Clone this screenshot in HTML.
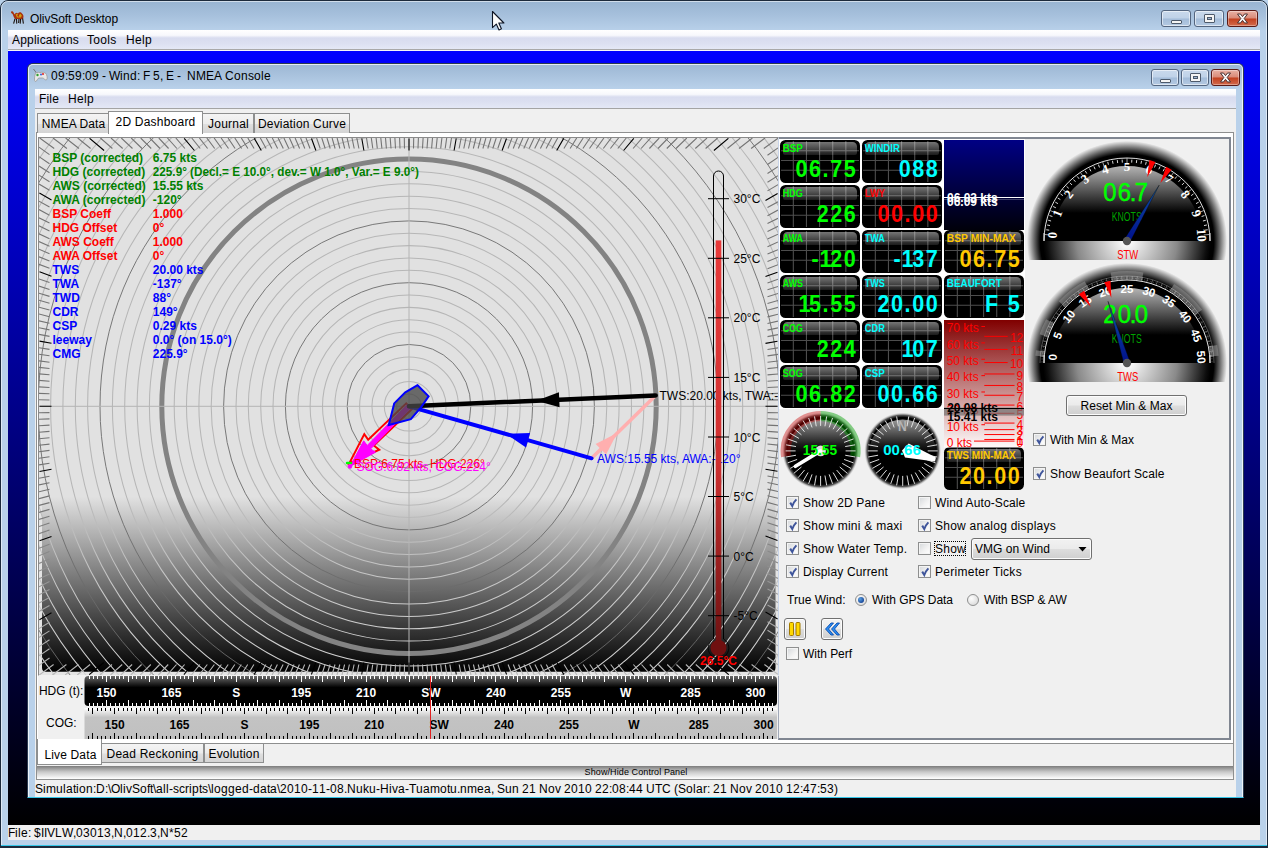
<!DOCTYPE html><html><head><meta charset="utf-8"><title>OlivSoft Desktop</title><style>
html,body{margin:0;padding:0}
body{width:1268px;height:848px;overflow:hidden;position:relative;background:#b9d1ea;font-family:"Liberation Sans",sans-serif;font-size:12px;color:#000;line-height:14px}
.a{position:absolute;box-sizing:border-box}
.t{position:absolute;white-space:nowrap;line-height:14px;height:14px}
.b{font-weight:bold}
.wb{position:absolute;box-sizing:border-box;border:1px solid #53657f;border-radius:3px;background:linear-gradient(#c9d9ec 0,#bfd2e8 48%,#a3bcd9 52%,#b4c9e2 100%);box-shadow:inset 0 0 0 1px rgba(255,255,255,.55)}
.wc{position:absolute;box-sizing:border-box;border:1px solid #5a1a16;border-radius:3px;background:linear-gradient(#e8b1a4 0,#d98a78 48%,#c2401f 52%,#d36a4c 100%);box-shadow:inset 0 0 0 1px rgba(255,255,255,.35)}
.menu{position:absolute;box-sizing:border-box;background:linear-gradient(#ffffff 0,#f7f8fc 28%,#d8dcef 42%,#dce0f1 70%,#e4e8f6 100%)}
.tab{position:absolute;box-sizing:border-box;border:1px solid #8e8f8f;border-bottom:none;background:linear-gradient(#f4f4f4 0,#ececec 50%,#dfdfdf 55%,#d4d4d4 100%);text-align:center;white-space:nowrap}
.tabs{position:absolute;box-sizing:border-box;border:1px solid #8e8f8f;border-bottom:none;background:#fff;text-align:center;white-space:nowrap}
.cb{position:absolute;box-sizing:border-box;width:13px;height:13px;border:1px solid #8e8f8f;background:linear-gradient(135deg,#d4d7da 0,#f3f3f3 60%,#fff 100%);box-shadow:inset 0 0 0 1px #f4f4f4}
.btn{position:absolute;box-sizing:border-box;border:1px solid #707070;border-radius:3px;background:linear-gradient(#f2f2f2 0,#ebebeb 48%,#dddddd 52%,#cfcfcf 100%);box-shadow:inset 0 0 0 1px #fcfcfc;text-align:center;white-space:nowrap}
</style></head><body><div class="a" style="left:0;top:0;width:1268px;height:848px;border:1px solid #1c2a3c;border-radius:8px 8px 0 0;background:linear-gradient(#98b4d2 0,#a6c0dc 14px,#b9d1ea 30px,#b9d1ea 100%)"></div><div class="a" style="left:1px;top:1px;width:1266px;height:846px;border:1px solid rgba(255,255,255,.55);border-radius:7px 7px 0 0"></div><div class="a" style="left:1px;top:845px;width:1266px;height:1px;background:#35c6e8"></div><div class="a" style="left:0;top:846px;width:1268px;height:2px;background:#1c2a3c"></div><svg class="a" style="left:10px;top:10px" width="16" height="16" viewBox="10 10 16 16"><path d="M11 11.6 L12.6 11.2 L13.6 12.4 L14.4 14.6 C15.5 12.6 17 12 18 13.4 C19 11.8 21 11.8 22 13.6 C23.4 14.6 23.8 16.4 23.2 18.4 L21.6 19.2 L15.4 19 L14 17.6 L12.6 14 L11.2 13 Z" fill="#a8300c"/><path d="M15.6 14.4 L17.4 13.6 L18.4 15.4 L20.4 13.8 L21.8 15.4 L21 17.4 L17 17.6 Z" fill="#cfa010"/><path d="M17.2 15 L18.6 14.6 L19.4 16.2 L18 16.8 Z" fill="#b02010"/><path d="M15 18.6 L13.6 23.6 M16.4 19 L16.8 23.6 M20.6 19 L20.2 23.6 M22.6 18.4 L23.4 23.6 M19 19 L18.6 23" stroke="#1c1410" stroke-width="1.1" fill="none"/></svg><div class="t"  style="left:30px;top:12px;letter-spacing:-0.085px;">OlivSoft Desktop</div><div class="wb" style="left:1161px;top:10px;width:30px;height:17px"><div class="a" style="left:9px;top:9px;width:11px;height:4px;background:#f4f4f4;border:1px solid #4d5a6b;border-radius:1px"></div></div><div class="wb" style="left:1194px;top:10px;width:30px;height:17px"><div class="a" style="left:9px;top:3px;width:11px;height:9px;background:#f4f4f4;border:1px solid #4d5a6b;border-radius:1px"></div><div class="a" style="left:12px;top:6px;width:5px;height:3px;background:#9fb6d3;border:1px solid #4d5a6b"></div></div><div class="wc" style="left:1227px;top:10px;width:31px;height:17px"><svg class="a" style="left:8px;top:2px" width="13" height="11" viewBox="0 0 13 11"><path d="M1.5 1 L4.5 1 L6.5 3.6 L8.5 1 L11.5 1 L8.2 5.5 L11.5 10 L8.5 10 L6.5 7.4 L4.5 10 L1.5 10 L4.8 5.5 Z" fill="#f6f6f6" stroke="#4a3030" stroke-width="1"/></svg></div><div class="menu" style="left:8px;top:30px;width:1252px;height:20px;border-bottom:1px solid #a9a9a9"></div><div class="a" style="left:8px;top:50px;width:1252px;height:1px;background:#f4f4f8"></div><div class="t"  style="left:12px;top:33px;letter-spacing:0.191px;">Applications</div><div class="t"  style="left:87px;top:33px;letter-spacing:0.331px;">Tools</div><div class="t"  style="left:126px;top:33px;letter-spacing:0.33px;">Help</div><div class="a" style="left:8px;top:51px;width:1252px;height:774px;background:linear-gradient(#0000ff 0,#000000 100%)"></div><div class="a" style="left:8px;top:825px;width:1252px;height:15px;background:#f0f0f0"></div><svg class="a" style="left:8.4px;top:826.3px" width="184" height="16" font-family="Liberation Sans, sans-serif" font-size="12"><text x="0 7 10 13 20 23 26 33 36 39 47 54 65 68 75 82 89 96 103 106 115 118 125 132 139 142 149 152 161 166 173" y="11.2" fill="#000">File: $IIVLW,03013,N,012.3,N*52</text></svg><div class="a" style="left:27px;top:63px;width:1217px;height:735px;border:1px solid #2a3a50;border-bottom:1px solid #35c6e8;border-radius:6px 6px 0 0;background:linear-gradient(#9cb7d4 0,#aac3de 12px,#b9d1ea 25px,#b9d1ea 100%)"></div><div class="a" style="left:28px;top:64px;width:1215px;height:733px;border:1px solid rgba(255,255,255,.75);border-bottom:none;border-radius:5px 5px 0 0"></div><svg class="a" style="left:32px;top:67px" width="18" height="18" viewBox="0 0 18 18"><path d="M1.5 2 L4.5 6" stroke="#777" stroke-width="1"/><path d="M3 8 C3 5.5 6 5 8 5.5 C10 5 13.5 5 14.5 7.5 C15.5 10 15.5 13 14 13 C12.5 13 12 11 10.5 11 L7 11 C5.5 11 5 14.5 3.5 14.5 C2 14.5 2.5 10 3 8 Z" fill="#e8e8e8" stroke="#9a9a9a" stroke-width=".8"/><circle cx="5.5" cy="8" r="1.2" fill="#2fa02f"/><circle cx="11" cy="7" r="1.1" fill="#e03030"/><circle cx="9" cy="7.6" r="1" fill="#3060e0"/></svg><svg class="a" style="left:51.2px;top:69.2px" width="224" height="16" font-family="Liberation Sans, sans-serif" font-size="12"><text x="0 7 14 17 24 31 34 41 48 51 55 58 69 72 79 86 89 92 99 102 109 112 115 123 126 130 133 136 145 155 163 171 174 183 190 197 203 210 213" y="11.2" fill="#000">09:59:09 - Wind: F 5, E -  NMEA Console</text></svg><div class="wb" style="left:1151px;top:69px;width:28px;height:17px"><div class="a" style="left:8px;top:9px;width:11px;height:4px;background:#f4f4f4;border:1px solid #4d5a6b;border-radius:1px"></div></div><div class="wb" style="left:1181px;top:69px;width:28px;height:17px"><div class="a" style="left:8px;top:3px;width:11px;height:9px;background:#f4f4f4;border:1px solid #4d5a6b;border-radius:1px"></div><div class="a" style="left:11px;top:6px;width:5px;height:3px;background:#9fb6d3;border:1px solid #4d5a6b"></div></div><div class="wc" style="left:1211px;top:69px;width:29px;height:17px"><svg class="a" style="left:7px;top:2px" width="13" height="11" viewBox="0 0 13 11"><path d="M1.5 1 L4.5 1 L6.5 3.6 L8.5 1 L11.5 1 L8.2 5.5 L11.5 10 L8.5 10 L6.5 7.4 L4.5 10 L1.5 10 L4.8 5.5 Z" fill="#f6f6f6" stroke="#4a3030" stroke-width="1"/></svg></div><div class="menu" style="left:35px;top:89px;width:1201px;height:20px;border-bottom:1px solid #a4a4a4"></div><div class="a" style="left:35px;top:109px;width:1201px;height:1px;background:#fafafa"></div><div class="t"  style="left:39px;top:92px;letter-spacing:0.166px;">File</div><div class="t"  style="left:68px;top:92px;letter-spacing:0.33px;">Help</div><div class="a" style="left:35px;top:109px;width:1201px;height:688px;background:#f0f0f0"></div><div class="a" style="left:36px;top:132px;width:1198px;height:612px;border:1px solid #8e8f8f;background:#fff"></div><div class="a" style="left:38px;top:137px;width:741px;height:602px;background:#f0f0f0"></div><div class="tab" style="left:37px;top:113px;width:72px;height:20px;padding-top:3px;letter-spacing:0.072px;padding-left:1px;">NMEA Data</div><div class="tab" style="left:202px;top:113px;width:52px;height:20px;padding-top:3px;letter-spacing:0.235px;padding-left:1px;">Journal</div><div class="tab" style="left:254px;top:113px;width:96px;height:20px;padding-top:3px;letter-spacing:0.175px;">Deviation Curve</div><div class="tabs" style="left:108px;top:111px;width:95px;height:23px;padding-top:3px;letter-spacing:0.218px;">2D Dashboard</div><div class="a" style="left:36px;top:766px;width:1198px;height:14px;border:1px solid #8e8f8f;border-top:none;background:linear-gradient(#7c7c7c 0,#c8c8c8 45%,#ffffff 100%)"></div><div class="t" style="left:0;top:766px;width:1268px;text-align:center;font-size:9px;letter-spacing:.1px;line-height:12px;height:12px"><span style="position:relative;left:2px">Show/Hide Control Panel</span></div><svg class="a" style="left:35.4px;top:782.3px" width="807" height="16" font-family="Liberation Sans, sans-serif" font-size="12"><text x="0 8 11 21 28 31 38 41 44 51 58 61 70 73 76 85 88 91 97 105 112 115 118 121 128 131 134 138 144 150 154 157 164 167 173 176 179 186 193 200 207 214 218 225 232 235 242 245 252 259 266 273 277 284 291 295 302 309 312 321 328 334 341 345 354 357 363 370 374 381 388 395 405 412 415 422 425 432 442 449 456 459 462 470 477 484 487 494 501 504 513 520 526 529 536 543 550 557 560 567 574 577 584 591 594 601 608 611 620 627 636 639 643 651 658 661 668 672 675 678 685 692 695 704 711 717 720 727 734 741 748 751 758 765 768 775 782 785 792 799" y="11.2" fill="#000">Simulation:D:\OlivSoft\all-scripts\logged-data\2010-11-08.Nuku-Hiva-Tuamotu.nmea, Sun 21 Nov 2010 22:08:44 UTC (Solar: 21 Nov 2010 12:47:53)</text></svg><div class="a" style="left:1233px;top:743px;width:1px;height:37px;background:#8e8f8f"></div><div class="a" style="left:36px;top:743px;width:1px;height:37px;background:#8e8f8f"></div><div class="tab" style="left:101px;top:743px;width:103px;height:20px;padding-top:3px;letter-spacing:0.234px;border-bottom:1px solid #8e8f8f;">Dead Reckoning</div><div class="tab" style="left:204px;top:743px;width:60px;height:20px;padding-top:3px;letter-spacing:0.182px;border-bottom:1px solid #8e8f8f;">Evolution</div><div class="tabs" style="left:37px;top:739px;width:65px;height:26px;padding-top:9px;letter-spacing:0.145px;border-top:none;border-bottom:1px solid #8e8f8f;padding-left:2px;">Live Data</div><div class="a" style="left:778px;top:137px;width:453px;height:603px;border:2px solid #808691;border-left-width:1px;border-left-color:#a0a8b8;background:#f0f0f0"></div><svg class="a" style="left:39px;top:138px" width="739" height="537" viewBox="0 0 739 537" font-family="Liberation Sans, sans-serif" font-size="12"><defs><linearGradient id="pg" gradientUnits="userSpaceOnUse" x1="0" y1="0" x2="0" y2="534"><stop offset="0" stop-color="#e1e1e1"/><stop offset="0.672" stop-color="#e1e1e1"/><stop offset="1" stop-color="#000"/></linearGradient><clipPath id="pc"><rect x="0" y="0" width="739" height="537"/></clipPath><linearGradient id="tg" x1="0" y1="0" x2="0" y2="1"><stop offset="0" stop-color="#e83a3a"/><stop offset="0.55" stop-color="#cf3030"/><stop offset="1" stop-color="#701212"/></linearGradient><linearGradient id="tk" gradientUnits="userSpaceOnUse" x1="0" y1="0" x2="0" y2="537"><stop offset="0" stop-color="#747474"/><stop offset="0.68" stop-color="#747474"/><stop offset="0.85" stop-color="#9a9a9a"/><stop offset="1" stop-color="#b8b8b8"/></linearGradient><linearGradient id="rg" gradientUnits="userSpaceOnUse" x1="0" y1="0" x2="0" y2="537"><stop offset="0" stop-color="#b6b6b6"/><stop offset="0.66" stop-color="#b6b6b6"/><stop offset="0.85" stop-color="#c8c8c8"/><stop offset="1" stop-color="#d2d2d2"/></linearGradient></defs><g clip-path="url(#pc)"><rect x="0" y="0" width="739" height="537" fill="#e4e4e4"/><rect x="3" y="2.5" width="733.5" height="531.2" rx="4" fill="url(#pg)"/><g fill="none" stroke="url(#rg)" stroke-width="1.05"><circle cx="370" cy="268.3" r="12.4"/><circle cx="370" cy="268.3" r="24.7"/><circle cx="370" cy="268.3" r="37.1"/><circle cx="370" cy="268.3" r="49.4"/><circle cx="370" cy="268.3" r="74.2"/><circle cx="370" cy="268.3" r="86.5"/><circle cx="370" cy="268.3" r="98.9"/><circle cx="370" cy="268.3" r="111.2"/><circle cx="370" cy="268.3" r="136"/><circle cx="370" cy="268.3" r="148.3"/><circle cx="370" cy="268.3" r="160.7"/><circle cx="370" cy="268.3" r="173"/><circle cx="370" cy="268.3" r="197.8"/><circle cx="370" cy="268.3" r="210.1"/><circle cx="370" cy="268.3" r="222.5"/><circle cx="370" cy="268.3" r="234.8"/><circle cx="370" cy="268.3" r="259.6"/><circle cx="370" cy="268.3" r="271.9"/><circle cx="370" cy="268.3" r="284.3"/><circle cx="370" cy="268.3" r="296.6"/><circle cx="370" cy="268.3" r="321.4"/><circle cx="370" cy="268.3" r="333.7"/><circle cx="370" cy="268.3" r="346.1"/><circle cx="370" cy="268.3" r="358.4"/><circle cx="370" cy="268.3" r="383.2"/><circle cx="370" cy="268.3" r="395.5"/><circle cx="370" cy="268.3" r="407.9"/><circle cx="370" cy="268.3" r="420.2"/><circle cx="370" cy="268.3" r="445"/><circle cx="370" cy="268.3" r="457.3"/><circle cx="370" cy="268.3" r="469.7"/><circle cx="370" cy="268.3" r="482"/></g><g fill="none" stroke="#6c6c6c" stroke-width="0.9"><circle cx="370" cy="268.3" r="61.8"/><circle cx="370" cy="268.3" r="123.6"/><circle cx="370" cy="268.3" r="185.4"/><circle cx="370" cy="268.3" r="309"/><circle cx="370" cy="268.3" r="370.8"/><circle cx="370" cy="268.3" r="432.6"/><circle cx="370" cy="268.3" r="494.4"/></g><circle cx="370" cy="268.3" r="247.2" fill="none" stroke="#838383" stroke-width="5"/><path d="M0 268.3 H739 M370 0 V537" stroke="#b4b4b4" stroke-width="1" fill="none"/><path d="M374.7 0L374.5 10.5M379.4 0L379 10.5M384.1 0L383.5 10.5M388.8 0L388 10.5M393.5 0L392.6 10.5M398.2 0L397.1 10.5M402.9 0L401.7 10.5M407.7 0L406.2 10.5M412.5 0L410.8 10.5M422.2 0L420.1 10.5M427 0L424.8 10.5M431.9 0L429.5 10.5M436.9 0L434.3 10.5M441.9 0L439.1 10.5M446.9 0L443.9 10.5M452 0L448.8 10.5M457.2 0L453.8 10.5M462.4 0L458.8 10.5M473 0L469 10.5M478.4 0L474.2 10.5M483.9 0L479.4 10.5M489.5 0L484.8 10.5M495.1 0L490.2 10.5M500.9 0L495.7 10.5M506.7 0L501.4 10.5M512.7 0L507.1 10.5M518.7 0L512.9 10.5M531.2 0L524.9 10.5M537.7 0L531.1 10.5M544.2 0L537.4 10.5M551 0L543.9 10.5M557.9 0L550.5 10.5M564.9 0L557.3 10.5M572.2 0L564.3 10.5M579.6 0L571.4 10.5M587.3 0L578.8 10.5M603.2 0L594.1 10.5M611.6 0L602.1 10.5M620.2 0L610.4 10.5M629.1 0L619 10.5M638.3 0L627.8 10.5M647.8 0L637 10.5M657.7 0L646.5 10.5M668 0L656.3 10.5M678.6 0L666.6 10.5M701.3 0L688.4 10.5M713.4 0L700 10.5M726 0L712.1 10.5M739 0.2L724.8 10.5M739 9.9L728.5 17.3M739 19.4L728.5 26.5M739 28.7L728.5 35.5M739 37.7L728.5 44.3M739 46.6L728.5 52.9M739 63.8L728.5 69.6M739 72.1L728.5 77.7M739 80.3L728.5 85.6M739 88.3L728.5 93.4M739 96.2L728.5 101.1M739 104L728.5 108.7M739 111.7L728.5 116.1M739 119.2L728.5 123.5M739 126.7L728.5 130.7M739 141.2L728.5 144.9M739 148.4L728.5 151.8M739 155.5L728.5 158.7M739 162.5L728.5 165.5M739 169.4L728.5 172.2M739 176.3L728.5 178.9M739 183.1L728.5 185.5M739 189.9L728.5 192.1M739 196.6L728.5 198.6M739 209.9L728.5 211.5M739 216.4L728.5 217.9M739 223L728.5 224.3M739 229.5L728.5 230.6M739 236L728.5 236.9M739 242.5L728.5 243.2M739 249L728.5 249.5M739 255.4L728.5 255.8M739 261.9L728.5 262M739 274.7L728.5 274.6M739 281.2L728.5 280.8M739 287.6L728.5 287.1M739 294.1L728.5 293.4M739 300.6L728.5 299.7M739 307.1L728.5 306M739 313.6L728.5 312.3M739 320.2L728.5 318.7M739 326.7L728.5 325.1M739 340L728.5 338M739 346.7L728.5 344.5M739 353.5L728.5 351.1M739 360.3L728.5 357.7M739 367.2L728.5 364.4M739 374.1L728.5 371.1M739 381.1L728.5 377.9M739 388.2L728.5 384.8M739 395.4L728.5 391.7M739 409.9L728.5 405.9M739 417.4L728.5 413.1M739 424.9L728.5 420.5M739 432.6L728.5 427.9M739 440.4L728.5 435.5M739 448.3L728.5 443.2M739 456.3L728.5 451M739 464.5L728.5 458.9M739 472.8L728.5 467M739 490L728.5 483.7M739 498.9L728.5 492.3M739 507.9L728.5 501.1M739 517.2L728.5 510.1M739 526.7L728.5 519.3M739 536.4L725.4 526.5M726.6 537L712.6 526.5M713.9 537L700.5 526.5M701.8 537L688.9 526.5M679.1 537L667 526.5M668.4 537L656.8 526.5M658.1 537L646.9 526.5M648.2 537L637.4 526.5M638.7 537L628.2 526.5M629.5 537L619.3 526.5M620.6 537L610.8 526.5M611.9 537L602.5 526.5M603.6 537L594.4 526.5M587.6 537L579.1 526.5M579.9 537L571.7 526.5M572.5 537L564.6 526.5M565.2 537L557.6 526.5M558.1 537L550.8 526.5M551.2 537L544.2 526.5M544.5 537L537.7 526.5M537.9 537L531.3 526.5M531.5 537L525.1 526.5M518.9 537L513.1 526.5M512.9 537L507.3 526.5M506.9 537L501.6 526.5M501.1 537L495.9 526.5M495.3 537L490.4 526.5M489.6 537L485 526.5M484.1 537L479.6 526.5M478.6 537L474.3 526.5M473.1 537L469.1 526.5M462.5 537L458.9 526.5M457.3 537L453.9 526.5M452.1 537L448.9 526.5M447 537L444 526.5M442 537L439.2 526.5M437 537L434.4 526.5M432 537L429.6 526.5M427.1 537L424.9 526.5M422.2 537L420.2 526.5M412.6 537L410.9 526.5M407.8 537L406.3 526.5M403 537L401.7 526.5M398.2 537L397.1 526.5M393.5 537L392.6 526.5M388.8 537L388.1 526.5M384.1 537L383.5 526.5M379.4 537L379 526.5M374.7 537L374.5 526.5M365.3 537L365.5 526.5M360.6 537L361 526.5M355.9 537L356.5 526.5M351.2 537L351.9 526.5M346.5 537L347.4 526.5M341.8 537L342.9 526.5M337 537L338.3 526.5M332.2 537L333.7 526.5M327.4 537L329.1 526.5M317.8 537L319.8 526.5M312.9 537L315.1 526.5M308 537L310.4 526.5M303 537L305.6 526.5M298 537L300.8 526.5M293 537L296 526.5M287.9 537L291.1 526.5M282.7 537L286.1 526.5M277.5 537L281.1 526.5M266.9 537L270.9 526.5M261.4 537L265.7 526.5M255.9 537L260.4 526.5M250.4 537L255 526.5M244.7 537L249.6 526.5M238.9 537L244.1 526.5M233.1 537L238.4 526.5M227.1 537L232.7 526.5M221.1 537L226.9 526.5M208.5 537L214.9 526.5M202.1 537L208.7 526.5M195.5 537L202.3 526.5M188.8 537L195.8 526.5M181.9 537L189.2 526.5M174.8 537L182.4 526.5M167.5 537L175.4 526.5M160.1 537L168.3 526.5M152.4 537L160.9 526.5M136.4 537L145.6 526.5M128.1 537L137.5 526.5M119.4 537L129.2 526.5M110.5 537L120.7 526.5M101.3 537L111.8 526.5M91.8 537L102.6 526.5M81.9 537L93.1 526.5M71.6 537L83.2 526.5M60.9 537L73 526.5M38.2 537L51.1 526.5M26.1 537L39.5 526.5M13.4 537L27.4 526.5M0.2 537L14.6 526.5M0 527.4L10.5 520M0 517.9L10.5 510.8M0 508.6L10.5 501.8M0 499.5L10.5 492.9M0 490.6L10.5 484.3M0 473.4L10.5 467.6M0 465L10.5 459.4M0 456.8L10.5 451.5M0 448.8L10.5 443.6M0 440.8L10.5 435.9M0 433L10.5 428.4M0 425.4L10.5 420.9M0 417.8L10.5 413.5M0 410.3L10.5 406.3M0 395.7L10.5 392.1M0 388.5L10.5 385.1M0 381.4L10.5 378.2M0 374.4L10.5 371.4M0 367.4L10.5 364.6M0 360.6L10.5 357.9M0 353.7L10.5 351.3M0 346.9L10.5 344.7M0 340.2L10.5 338.2M0 326.9L10.5 325.2M0 320.3L10.5 318.8M0 313.7L10.5 312.4M0 307.2L10.5 306.1M0 300.7L10.5 299.8M0 294.2L10.5 293.4M0 287.7L10.5 287.1M0 281.2L10.5 280.9M0 274.8L10.5 274.6M0 261.8L10.5 262M0 255.4L10.5 255.7M0 248.9L10.5 249.5M0 242.4L10.5 243.2M0 235.9L10.5 236.8M0 229.4L10.5 230.5M0 222.9L10.5 224.2M0 216.3L10.5 217.8M0 209.7L10.5 211.4M0 196.4L10.5 198.4M0 189.7L10.5 191.9M0 182.9L10.5 185.3M0 176L10.5 178.7M0 169.2L10.5 172M0 162.2L10.5 165.2M0 155.2L10.5 158.4M0 148.1L10.5 151.5M0 140.9L10.5 144.5M0 126.3L10.5 130.3M0 118.8L10.5 123.1M0 111.2L10.5 115.7M0 103.6L10.5 108.2M0 95.8L10.5 100.7M0 87.8L10.5 93M0 79.8L10.5 85.1M0 71.6L10.5 77.2M0 63.2L10.5 69M0 46L10.5 52.3M0 37.1L10.5 43.7M0 28L10.5 34.8M0 18.7L10.5 25.8M0 9.2L10.5 16.6M0.7 0L15.2 10.5M14 0L27.9 10.5M26.6 0L40 10.5M38.7 0L51.6 10.5M61.4 0L73.4 10.5M72 0L83.7 10.5M82.3 0L93.5 10.5M92.2 0L103 10.5M101.7 0L112.2 10.5M110.9 0L121 10.5M119.8 0L129.6 10.5M128.4 0L137.9 10.5M136.8 0L145.9 10.5M152.7 0L161.2 10.5M160.4 0L168.6 10.5M167.8 0L175.7 10.5M175.1 0L182.7 10.5M182.1 0L189.5 10.5M189 0L196.1 10.5M195.8 0L202.6 10.5M202.3 0L208.9 10.5M208.8 0L215.1 10.5M221.3 0L227.1 10.5M227.3 0L232.9 10.5M233.3 0L238.6 10.5M239.1 0L244.3 10.5M244.9 0L249.8 10.5M250.5 0L255.2 10.5M256.1 0L260.6 10.5M261.6 0L265.8 10.5M267 0L271 10.5M277.6 0L281.2 10.5M282.8 0L286.2 10.5M288 0L291.2 10.5M293.1 0L296.1 10.5M298.1 0L300.9 10.5M303.1 0L305.7 10.5M308.1 0L310.5 10.5M313 0L315.2 10.5M317.8 0L319.9 10.5M327.5 0L329.2 10.5M332.3 0L333.8 10.5M337.1 0L338.3 10.5M341.8 0L342.9 10.5M346.5 0L347.4 10.5M351.2 0L352 10.5M355.9 0L356.5 10.5M360.6 0L361 10.5M365.3 0L365.5 10.5" stroke="url(#tk)" stroke-width="1.1" fill="none"/><path d="M370 0.5L370 12.5M417.2 0.5L415.1 12.5M467.5 0.5L463.1 12.5M524.7 0.4L517.7 12.5M594.8 0.4L584.6 12.5M689.4 0.3L674.9 12.5M738.6 55.5L726.5 62.5M738.5 134.2L726.5 138.5M738.5 203.3L726.5 205.4M738.5 268.3L726.5 268.3M738.5 333.3L726.5 331.2M738.5 402.4L726.5 398.1M738.6 481.1L726.5 474.1M689.8 536.7L675.3 524.5M595.1 536.6L585 524.5M524.9 536.6L517.9 524.5M467.6 536.5L463.2 524.5M417.3 536.5L415.2 524.5M370 536.5L370 524.5M322.7 536.5L324.8 524.5M272.4 536.5L276.8 524.5M215.1 536.6L222.1 524.5M144.9 536.6L155 524.5M50.2 536.7L64.7 524.5M0.4 481.7L12.5 474.7M0.5 402.8L12.5 398.4M0.5 333.5L12.5 331.3M0.5 268.3L12.5 268.3M0.5 203.1L12.5 205.3M0.5 133.8L12.5 138.2M0.4 54.9L12.5 61.9M50.6 0.3L65.1 12.5M145.2 0.4L155.4 12.5M215.3 0.4L222.3 12.5M272.5 0.5L276.9 12.5M322.8 0.5L324.9 12.5" stroke="#000" stroke-width="1.1" fill="none"/><path d="M552.6 320.3L616.7 257.4" stroke="#ffafaf" stroke-width="3.5" fill="none" stroke-linecap="round"/><path d="M578.2 295.1L567.1 316.6L556.6 305.9Z" fill="#ffafaf"/><path d="M367.2 265.4L329.2 301.7L325.3 296.1L310.3 325.3L340.2 311.7L334.8 307.5L372.8 271.2Z" fill="none" stroke="#f00" stroke-width="2"/><path d="M368.3 266.6L328.2 307.5L324.7 302.8L311 328.5L336.5 314.2L331.6 310.9L371.7 270Z" fill="#f0f" stroke="#f0f" stroke-width="1"/><path d="M370 268.3L552.6 320.3" stroke="#00f" stroke-width="4" fill="none" stroke-linecap="round"/><path d="M467 295.9L491.1 295L487 309.4Z" fill="#00f"/><path d="M370 268.3L616.7 257.4" stroke="#000" stroke-width="4.5" fill="none" stroke-linecap="round"/><path d="M497.3 262.7L519.9 254.2L520.6 269.2Z" fill="#000"/><path d="M378.6 247.2L366.3 254.3L355.2 265.4L349.7 287L371.8 281.1L382 269.3L389.6 258.3Z" fill="rgba(70,70,70,.78)" stroke="#00f" stroke-width="2" stroke-linejoin="miter"/><path d="M308 325h4" stroke="#0f0" stroke-width="2.5" stroke-linecap="round"/><circle cx="311" cy="328.5" r="2.2" fill="#f0f"/><text x="315" y="329.5" fill="#f00">BSP:6.75 kts, HDG:226°</text><text x="317.5" y="332.8" fill="#f0f">SOG:6.82 kts, COG:224°</text><text x="558" y="324.5" fill="#00f">AWS:15.55 kts, AWA:-120°</text><text x="620.5" y="262.3" fill="#000">TWS:20.00 kts, TWA:-137°</text><rect x="676.7" y="102.4" width="5.6" height="402.6" fill="url(#tg)"/><circle cx="679.5" cy="510" r="8" fill="#701010"/><path d="M674.5 501 V38 A5 5 0 0 1 684.5 38 V501" fill="none" stroke="#000" stroke-width="1"/><path d="M674.5 501 A10.3 10.3 0 1 0 684.5 501" fill="none" stroke="#000" stroke-width="1" opacity=".8"/><text x="694.5" y="482.2" fill="#000">-5°C</text><text x="694.5" y="422.6" fill="#000">0°C</text><text x="694.5" y="363" fill="#000">5°C</text><text x="694.5" y="303.5" fill="#000">10°C</text><text x="694.5" y="243.9" fill="#000">15°C</text><text x="694.5" y="184.3" fill="#000">20°C</text><text x="694.5" y="124.8" fill="#000">25°C</text><text x="694.5" y="65.2" fill="#000">30°C</text><path d="M669 477.7H690M669 418.1H690M669 358.5H690M669 299H690M669 239.4H690M669 179.8H690M669 120.3H690M669 60.7H690" stroke="#000" stroke-width="1" fill="none"/><text x="679.5" y="527" fill="#f00" font-weight="bold" text-anchor="middle">26.5°C</text><g font-weight="bold"><text x="13.5" y="23.5" fill="#008000">BSP (corrected)</text><text x="113.8" y="23.5" fill="#008000">6.75 kts</text><text x="13.5" y="37.5" fill="#008000">HDG (corrected)</text><text x="113.8" y="37.5" fill="#008000" textLength="266" lengthAdjust="spacingAndGlyphs">225.9° (Decl.= E 10.0°, dev.= W 1.0°, Var.= E 9.0°)</text><text x="13.5" y="51.5" fill="#008000">AWS (corrected)</text><text x="113.8" y="51.5" fill="#008000">15.55 kts</text><text x="13.5" y="65.5" fill="#008000">AWA (corrected)</text><text x="113.8" y="65.5" fill="#008000">-120°</text><text x="13.5" y="79.5" fill="#f00">BSP Coeff</text><text x="113.8" y="79.5" fill="#f00">1.000</text><text x="13.5" y="93.5" fill="#f00">HDG Offset</text><text x="113.8" y="93.5" fill="#f00">0°</text><text x="13.5" y="107.5" fill="#f00">AWS Coeff</text><text x="113.8" y="107.5" fill="#f00">1.000</text><text x="13.5" y="121.5" fill="#f00">AWA Offset</text><text x="113.8" y="121.5" fill="#f00">0°</text><text x="13.5" y="135.5" fill="#00f">TWS</text><text x="113.8" y="135.5" fill="#00f">20.00 kts</text><text x="13.5" y="149.5" fill="#00f">TWA</text><text x="113.8" y="149.5" fill="#00f">-137°</text><text x="13.5" y="163.5" fill="#00f">TWD</text><text x="113.8" y="163.5" fill="#00f">88°</text><text x="13.5" y="177.5" fill="#00f">CDR</text><text x="113.8" y="177.5" fill="#00f">149°</text><text x="13.5" y="191.5" fill="#00f">CSP</text><text x="113.8" y="191.5" fill="#00f">0.29 kts</text><text x="13.5" y="205.5" fill="#00f">leeway</text><text x="113.8" y="205.5" fill="#00f">0.0° (on 15.0°)</text><text x="13.5" y="219.5" fill="#00f">CMG</text><text x="113.8" y="219.5" fill="#00f">225.9°</text></g></g></svg><div class="a" style="left:38px;top:137px;width:741px;height:539px;border:1px solid #8a8a8a;border-right-color:#c8d4e8;border-bottom-color:#f0f0f0;pointer-events:none"></div><div class="t" style="left:39px;top:684px;letter-spacing:-.05px">HDG (t):</div><div class="t" style="left:46px;top:716px">COG:</div><svg class="a" style="left:84px;top:676px" width="693" height="30" viewBox="0 0 693 30" font-family="Liberation Sans, sans-serif" font-size="12" font-weight="bold"><defs><linearGradient id="hg" x1="0" y1="0" x2="0" y2="1"><stop offset="0" stop-color="#6a6a6a"/><stop offset="0.38" stop-color="#000"/><stop offset="1" stop-color="#000"/></linearGradient></defs><rect x="0.5" y="0" width="692.5" height="30" rx="4" fill="url(#hg)"/><path d="M5.5 0v3M5.5 30v-3M9.5 0v3M9.5 30v-3M13.5 0v3M13.5 30v-3M18.5 0v3M18.5 30v-3M26.5 0v3M26.5 30v-3M31.5 0v3M31.5 30v-3M35.5 0v3M35.5 30v-3M39.5 0v3M39.5 30v-3M48.5 0v3M48.5 30v-3M52.5 0v3M52.5 30v-3M57.5 0v3M57.5 30v-3M61.5 0v3M61.5 30v-3M70.5 0v3M70.5 30v-3M74.5 0v3M74.5 30v-3M78.5 0v3M78.5 30v-3M83.5 0v3M83.5 30v-3M91.5 0v3M91.5 30v-3M96.5 0v3M96.5 30v-3M100.5 0v3M100.5 30v-3M104.5 0v3M104.5 30v-3M113.5 0v3M113.5 30v-3M117.5 0v3M117.5 30v-3M122.5 0v3M122.5 30v-3M126.5 0v3M126.5 30v-3M135.5 0v3M135.5 30v-3M139.5 0v3M139.5 30v-3M143.5 0v3M143.5 30v-3M147.5 0v3M147.5 30v-3M156.5 0v3M156.5 30v-3M160.5 0v3M160.5 30v-3M165.5 0v3M165.5 30v-3M169.5 0v3M169.5 30v-3M178.5 0v3M178.5 30v-3M182.5 0v3M182.5 30v-3M186.5 0v3M186.5 30v-3M191.5 0v3M191.5 30v-3M199.5 0v3M199.5 30v-3M204.5 0v3M204.5 30v-3M208.5 0v3M208.5 30v-3M212.5 0v3M212.5 30v-3M221.5 0v3M221.5 30v-3M225.5 0v3M225.5 30v-3M230.5 0v3M230.5 30v-3M234.5 0v3M234.5 30v-3M243.5 0v3M243.5 30v-3M247.5 0v3M247.5 30v-3M251.5 0v3M251.5 30v-3M256.5 0v3M256.5 30v-3M264.5 0v3M264.5 30v-3M269.5 0v3M269.5 30v-3M273.5 0v3M273.5 30v-3M277.5 0v3M277.5 30v-3M286.5 0v3M286.5 30v-3M290.5 0v3M290.5 30v-3M295.5 0v3M295.5 30v-3M299.5 0v3M299.5 30v-3M308.5 0v3M308.5 30v-3M312.5 0v3M312.5 30v-3M316.5 0v3M316.5 30v-3M321.5 0v3M321.5 30v-3M329.5 0v3M329.5 30v-3M334.5 0v3M334.5 30v-3M338.5 0v3M338.5 30v-3M342.5 0v3M342.5 30v-3M351.5 0v3M351.5 30v-3M355.5 0v3M355.5 30v-3M360.5 0v3M360.5 30v-3M364.5 0v3M364.5 30v-3M372.5 0v3M372.5 30v-3M377.5 0v3M377.5 30v-3M381.5 0v3M381.5 30v-3M385.5 0v3M385.5 30v-3M394.5 0v3M394.5 30v-3M398.5 0v3M398.5 30v-3M403.5 0v3M403.5 30v-3M407.5 0v3M407.5 30v-3M416.5 0v3M416.5 30v-3M420.5 0v3M420.5 30v-3M424.5 0v3M424.5 30v-3M429.5 0v3M429.5 30v-3M437.5 0v3M437.5 30v-3M442.5 0v3M442.5 30v-3M446.5 0v3M446.5 30v-3M450.5 0v3M450.5 30v-3M459.5 0v3M459.5 30v-3M463.5 0v3M463.5 30v-3M468.5 0v3M468.5 30v-3M472.5 0v3M472.5 30v-3M481.5 0v3M481.5 30v-3M485.5 0v3M485.5 30v-3M489.5 0v3M489.5 30v-3M494.5 0v3M494.5 30v-3M502.5 0v3M502.5 30v-3M507.5 0v3M507.5 30v-3M511.5 0v3M511.5 30v-3M515.5 0v3M515.5 30v-3M524.5 0v3M524.5 30v-3M528.5 0v3M528.5 30v-3M533.5 0v3M533.5 30v-3M537.5 0v3M537.5 30v-3M546.5 0v3M546.5 30v-3M550.5 0v3M550.5 30v-3M554.5 0v3M554.5 30v-3M559.5 0v3M559.5 30v-3M567.5 0v3M567.5 30v-3M572.5 0v3M572.5 30v-3M576.5 0v3M576.5 30v-3M580.5 0v3M580.5 30v-3M589.5 0v3M589.5 30v-3M593.5 0v3M593.5 30v-3M597.5 0v3M597.5 30v-3M602.5 0v3M602.5 30v-3M610.5 0v3M610.5 30v-3M615.5 0v3M615.5 30v-3M619.5 0v3M619.5 30v-3M623.5 0v3M623.5 30v-3M632.5 0v3M632.5 30v-3M636.5 0v3M636.5 30v-3M641.5 0v3M641.5 30v-3M645.5 0v3M645.5 30v-3M654.5 0v3M654.5 30v-3M658.5 0v3M658.5 30v-3M662.5 0v3M662.5 30v-3M667.5 0v3M667.5 30v-3M675.5 0v3M675.5 30v-3M680.5 0v3M680.5 30v-3M684.5 0v3M684.5 30v-3M688.5 0v3M688.5 30v-3M22.5 0v6M22.5 30v-6M44.5 0v6M44.5 30v-6M65.5 0v6M65.5 30v-6M87.5 0v6M87.5 30v-6M109.5 0v6M109.5 30v-6M130.5 0v6M130.5 30v-6M152.5 0v6M152.5 30v-6M173.5 0v6M173.5 30v-6M195.5 0v6M195.5 30v-6M217.5 0v6M217.5 30v-6M238.5 0v6M238.5 30v-6M260.5 0v6M260.5 30v-6M282.5 0v6M282.5 30v-6M303.5 0v6M303.5 30v-6M325.5 0v6M325.5 30v-6M347.5 0v6M347.5 30v-6M368.5 0v6M368.5 30v-6M390.5 0v6M390.5 30v-6M411.5 0v6M411.5 30v-6M433.5 0v6M433.5 30v-6M455.5 0v6M455.5 30v-6M476.5 0v6M476.5 30v-6M498.5 0v6M498.5 30v-6M520.5 0v6M520.5 30v-6M541.5 0v6M541.5 30v-6M563.5 0v6M563.5 30v-6M585.5 0v6M585.5 30v-6M606.5 0v6M606.5 30v-6M628.5 0v6M628.5 30v-6M649.5 0v6M649.5 30v-6M671.5 0v6M671.5 30v-6" stroke="#fff" stroke-width="1" fill="none" shape-rendering="crispEdges"/><text x="22.5" y="21" fill="#fff" text-anchor="middle">150</text><text x="87.4" y="21" fill="#fff" text-anchor="middle">165</text><text x="152.3" y="21" fill="#fff" text-anchor="middle">S</text><text x="217.2" y="21" fill="#fff" text-anchor="middle">195</text><text x="282.1" y="21" fill="#fff" text-anchor="middle">210</text><text x="347" y="21" fill="#fff" text-anchor="middle">SW</text><text x="411.9" y="21" fill="#fff" text-anchor="middle">240</text><text x="476.8" y="21" fill="#fff" text-anchor="middle">255</text><text x="541.7" y="21" fill="#fff" text-anchor="middle">W</text><text x="606.6" y="21" fill="#fff" text-anchor="middle">285</text><text x="671.5" y="21" fill="#fff" text-anchor="middle">300</text></svg><svg class="a" style="left:84px;top:708px" width="693" height="31" viewBox="0 0 693 31" font-family="Liberation Sans, sans-serif" font-size="12" font-weight="bold"><defs><linearGradient id="cg" x1="0" y1="0" x2="0" y2="1"><stop offset="0" stop-color="#fff"/><stop offset="0.3" stop-color="#c3c3c3"/><stop offset="1" stop-color="#c0c0c0"/></linearGradient></defs><rect x="0.5" y="0" width="692.5" height="31" fill="url(#cg)"/><path d="M4.5 0v3M4.5 31v-3M13.5 0v3M13.5 31v-3M17.5 0v3M17.5 31v-3M21.5 0v3M21.5 31v-3M26.5 0v3M26.5 31v-3M34.5 0v3M34.5 31v-3M39.5 0v3M39.5 31v-3M43.5 0v3M43.5 31v-3M47.5 0v3M47.5 31v-3M56.5 0v3M56.5 31v-3M60.5 0v3M60.5 31v-3M65.5 0v3M65.5 31v-3M69.5 0v3M69.5 31v-3M78.5 0v3M78.5 31v-3M82.5 0v3M82.5 31v-3M86.5 0v3M86.5 31v-3M91.5 0v3M91.5 31v-3M99.5 0v3M99.5 31v-3M104.5 0v3M104.5 31v-3M108.5 0v3M108.5 31v-3M112.5 0v3M112.5 31v-3M121.5 0v3M121.5 31v-3M125.5 0v3M125.5 31v-3M130.5 0v3M130.5 31v-3M134.5 0v3M134.5 31v-3M143.5 0v3M143.5 31v-3M147.5 0v3M147.5 31v-3M151.5 0v3M151.5 31v-3M156.5 0v3M156.5 31v-3M164.5 0v3M164.5 31v-3M169.5 0v3M169.5 31v-3M173.5 0v3M173.5 31v-3M177.5 0v3M177.5 31v-3M186.5 0v3M186.5 31v-3M190.5 0v3M190.5 31v-3M195.5 0v3M195.5 31v-3M199.5 0v3M199.5 31v-3M208.5 0v3M208.5 31v-3M212.5 0v3M212.5 31v-3M216.5 0v3M216.5 31v-3M220.5 0v3M220.5 31v-3M229.5 0v3M229.5 31v-3M233.5 0v3M233.5 31v-3M238.5 0v3M238.5 31v-3M242.5 0v3M242.5 31v-3M251.5 0v3M251.5 31v-3M255.5 0v3M255.5 31v-3M259.5 0v3M259.5 31v-3M264.5 0v3M264.5 31v-3M272.5 0v3M272.5 31v-3M277.5 0v3M277.5 31v-3M281.5 0v3M281.5 31v-3M285.5 0v3M285.5 31v-3M294.5 0v3M294.5 31v-3M298.5 0v3M298.5 31v-3M303.5 0v3M303.5 31v-3M307.5 0v3M307.5 31v-3M316.5 0v3M316.5 31v-3M320.5 0v3M320.5 31v-3M324.5 0v3M324.5 31v-3M329.5 0v3M329.5 31v-3M337.5 0v3M337.5 31v-3M342.5 0v3M342.5 31v-3M346.5 0v3M346.5 31v-3M350.5 0v3M350.5 31v-3M359.5 0v3M359.5 31v-3M363.5 0v3M363.5 31v-3M368.5 0v3M368.5 31v-3M372.5 0v3M372.5 31v-3M381.5 0v3M381.5 31v-3M385.5 0v3M385.5 31v-3M389.5 0v3M389.5 31v-3M394.5 0v3M394.5 31v-3M402.5 0v3M402.5 31v-3M407.5 0v3M407.5 31v-3M411.5 0v3M411.5 31v-3M415.5 0v3M415.5 31v-3M424.5 0v3M424.5 31v-3M428.5 0v3M428.5 31v-3M433.5 0v3M433.5 31v-3M437.5 0v3M437.5 31v-3M445.5 0v3M445.5 31v-3M450.5 0v3M450.5 31v-3M454.5 0v3M454.5 31v-3M458.5 0v3M458.5 31v-3M467.5 0v3M467.5 31v-3M471.5 0v3M471.5 31v-3M476.5 0v3M476.5 31v-3M480.5 0v3M480.5 31v-3M489.5 0v3M489.5 31v-3M493.5 0v3M493.5 31v-3M497.5 0v3M497.5 31v-3M502.5 0v3M502.5 31v-3M510.5 0v3M510.5 31v-3M515.5 0v3M515.5 31v-3M519.5 0v3M519.5 31v-3M523.5 0v3M523.5 31v-3M532.5 0v3M532.5 31v-3M536.5 0v3M536.5 31v-3M541.5 0v3M541.5 31v-3M545.5 0v3M545.5 31v-3M554.5 0v3M554.5 31v-3M558.5 0v3M558.5 31v-3M562.5 0v3M562.5 31v-3M567.5 0v3M567.5 31v-3M575.5 0v3M575.5 31v-3M580.5 0v3M580.5 31v-3M584.5 0v3M584.5 31v-3M588.5 0v3M588.5 31v-3M597.5 0v3M597.5 31v-3M601.5 0v3M601.5 31v-3M606.5 0v3M606.5 31v-3M610.5 0v3M610.5 31v-3M619.5 0v3M619.5 31v-3M623.5 0v3M623.5 31v-3M627.5 0v3M627.5 31v-3M632.5 0v3M632.5 31v-3M640.5 0v3M640.5 31v-3M645.5 0v3M645.5 31v-3M649.5 0v3M649.5 31v-3M653.5 0v3M653.5 31v-3M662.5 0v3M662.5 31v-3M666.5 0v3M666.5 31v-3M670.5 0v3M670.5 31v-3M675.5 0v3M675.5 31v-3M683.5 0v3M683.5 31v-3M688.5 0v3M688.5 31v-3M8.5 0v6M8.5 31v-6M30.5 0v6M30.5 31v-6M52.5 0v6M52.5 31v-6M73.5 0v6M73.5 31v-6M95.5 0v6M95.5 31v-6M117.5 0v6M117.5 31v-6M138.5 0v6M138.5 31v-6M160.5 0v6M160.5 31v-6M182.5 0v6M182.5 31v-6M203.5 0v6M203.5 31v-6M225.5 0v6M225.5 31v-6M246.5 0v6M246.5 31v-6M268.5 0v6M268.5 31v-6M290.5 0v6M290.5 31v-6M311.5 0v6M311.5 31v-6M333.5 0v6M333.5 31v-6M355.5 0v6M355.5 31v-6M376.5 0v6M376.5 31v-6M398.5 0v6M398.5 31v-6M420.5 0v6M420.5 31v-6M441.5 0v6M441.5 31v-6M463.5 0v6M463.5 31v-6M484.5 0v6M484.5 31v-6M506.5 0v6M506.5 31v-6M528.5 0v6M528.5 31v-6M549.5 0v6M549.5 31v-6M571.5 0v6M571.5 31v-6M593.5 0v6M593.5 31v-6M614.5 0v6M614.5 31v-6M636.5 0v6M636.5 31v-6M658.5 0v6M658.5 31v-6M679.5 0v6M679.5 31v-6" stroke="#000" stroke-width="1" fill="none" shape-rendering="crispEdges"/><text x="30.6" y="21.3" fill="#000" text-anchor="middle">150</text><text x="95.5" y="21.3" fill="#000" text-anchor="middle">165</text><text x="160.4" y="21.3" fill="#000" text-anchor="middle">S</text><text x="225.3" y="21.3" fill="#000" text-anchor="middle">195</text><text x="290.2" y="21.3" fill="#000" text-anchor="middle">210</text><text x="355.1" y="21.3" fill="#000" text-anchor="middle">SW</text><text x="420" y="21.3" fill="#000" text-anchor="middle">240</text><text x="484.9" y="21.3" fill="#000" text-anchor="middle">255</text><text x="549.8" y="21.3" fill="#000" text-anchor="middle">W</text><text x="614.7" y="21.3" fill="#000" text-anchor="middle">285</text><text x="679.6" y="21.3" fill="#000" text-anchor="middle">300</text></svg><div class="a" style="left:430px;top:676px;width:1px;height:63px;background:#e02020"></div><svg class="a" style="left:779px;top:137px" width="248" height="356" viewBox="0 0 248 356" font-family="Liberation Sans, sans-serif" font-size="12"><defs><linearGradient id="gl" x1="0" y1="0" x2="0" y2="1"><stop offset="0" stop-color="#757575"/><stop offset="1" stop-color="#1c1c1c"/></linearGradient><linearGradient id="bl" x1="0" y1="0" x2="0" y2="1"><stop offset="0" stop-color="#000084"/><stop offset="1" stop-color="#00000a"/></linearGradient><linearGradient id="rd" x1="0" y1="0" x2="0" y2="1"><stop offset="0" stop-color="#800000"/><stop offset="1" stop-color="#fffafa"/></linearGradient><radialGradient id="dg" cx="0.5" cy="0.5" r="0.5"><stop offset="0" stop-color="#000"/><stop offset="0.87" stop-color="#000"/><stop offset="0.93" stop-color="#5a5a5a"/><stop offset="1" stop-color="#d0d0d0" stop-opacity="0"/></radialGradient><linearGradient id="dgl" x1="0" y1="0" x2="0" y2="1"><stop offset="0" stop-color="#9a9a9a"/><stop offset="0.75" stop-color="#1c1c1c"/><stop offset="1" stop-color="#000"/></linearGradient></defs><rect x="0" y="2" width="246" height="270" fill="#fff"/><g><rect x="1" y="3" width="80" height="43" rx="5.5" fill="#000"/><path d="M4 9.5a4.5 4.5 0 0 1 4.5 -4.5h65a4.5 4.5 0 0 1 4.5 4.5v6.5a2 2 0 0 1 -2 2h-70a2 2 0 0 1 -2 -2z" fill="url(#gl)"/><path d="M14.33 4v41M27.46 4v41M40.59 4v41M53.72 4v41M66.85 4v41M2 13.8h78M2 23.55h78M2 33.3h78" stroke="#fff" stroke-opacity=".3" stroke-width="1.1" fill="none"/><text x="3.8" y="15.2" fill="#00ff00" font-size="11.8" font-weight="bold" textLength="20" lengthAdjust="spacingAndGlyphs">BSP</text><text transform="scale(0.91,1)" x="24.67 39.51 51.15 62.8 77.64" y="40.1" fill="#00ff00" font-size="23.7" font-weight="bold" text-anchor="middle">06.75</text></g><g><rect x="83" y="3" width="80" height="43" rx="5.5" fill="#000"/><path d="M86 9.5a4.5 4.5 0 0 1 4.5 -4.5h65a4.5 4.5 0 0 1 4.5 4.5v6.5a2 2 0 0 1 -2 2h-70a2 2 0 0 1 -2 -2z" fill="url(#gl)"/><path d="M96.33 4v41M109.46 4v41M122.59 4v41M135.72 4v41M148.85 4v41M84 13.8h78M84 23.55h78M84 33.3h78" stroke="#fff" stroke-opacity=".3" stroke-width="1.1" fill="none"/><text x="85.8" y="15.2" fill="#00ffff" font-size="11.8" font-weight="bold" textLength="35" lengthAdjust="spacingAndGlyphs">WINDIR</text><text transform="scale(0.91,1)" x="138.08 152.91 167.75" y="40.1" fill="#00ffff" font-size="23.7" font-weight="bold" text-anchor="middle">088</text></g><g><rect x="1" y="48" width="80" height="43" rx="5.5" fill="#000"/><path d="M4 54.5a4.5 4.5 0 0 1 4.5 -4.5h65a4.5 4.5 0 0 1 4.5 4.5v6.5a2 2 0 0 1 -2 2h-70a2 2 0 0 1 -2 -2z" fill="url(#gl)"/><path d="M14.33 49v41M27.46 49v41M40.59 49v41M53.72 49v41M66.85 49v41M2 58.8h78M2 68.55h78M2 78.3h78" stroke="#fff" stroke-opacity=".3" stroke-width="1.1" fill="none"/><text x="3.8" y="60.2" fill="#00ff00" font-size="11.8" font-weight="bold" textLength="20" lengthAdjust="spacingAndGlyphs">HDG</text><text transform="scale(0.91,1)" x="47.97 62.8 77.64" y="85.1" fill="#00ff00" font-size="23.7" font-weight="bold" text-anchor="middle">226</text></g><g><rect x="83" y="48" width="80" height="43" rx="5.5" fill="#000"/><path d="M86 54.5a4.5 4.5 0 0 1 4.5 -4.5h65a4.5 4.5 0 0 1 4.5 4.5v6.5a2 2 0 0 1 -2 2h-70a2 2 0 0 1 -2 -2z" fill="url(#gl)"/><path d="M96.33 49v41M109.46 49v41M122.59 49v41M135.72 49v41M148.85 49v41M84 58.8h78M84 68.55h78M84 78.3h78" stroke="#fff" stroke-opacity=".3" stroke-width="1.1" fill="none"/><text x="85.8" y="60.2" fill="#ff0000" font-size="11.8" font-weight="bold" textLength="20" lengthAdjust="spacingAndGlyphs">LWY</text><text transform="scale(0.91,1)" x="114.78 129.62 141.26 152.91 167.75" y="85.1" fill="#ff0000" font-size="23.7" font-weight="bold" text-anchor="middle">00.00</text></g><g><rect x="1" y="93" width="80" height="43" rx="5.5" fill="#000"/><path d="M4 99.5a4.5 4.5 0 0 1 4.5 -4.5h65a4.5 4.5 0 0 1 4.5 4.5v6.5a2 2 0 0 1 -2 2h-70a2 2 0 0 1 -2 -2z" fill="url(#gl)"/><path d="M14.33 94v41M27.46 94v41M40.59 94v41M53.72 94v41M66.85 94v41M2 103.8h78M2 113.55h78M2 123.3h78" stroke="#fff" stroke-opacity=".3" stroke-width="1.1" fill="none"/><text x="3.8" y="105.2" fill="#00ff00" font-size="11.8" font-weight="bold" textLength="20" lengthAdjust="spacingAndGlyphs">AWA</text><text transform="scale(0.91,1)" x="39.62 51.21 62.8 77.64" y="130.1" fill="#00ff00" font-size="23.7" font-weight="bold" text-anchor="middle">-120</text></g><g><rect x="83" y="93" width="80" height="43" rx="5.5" fill="#000"/><path d="M86 99.5a4.5 4.5 0 0 1 4.5 -4.5h65a4.5 4.5 0 0 1 4.5 4.5v6.5a2 2 0 0 1 -2 2h-70a2 2 0 0 1 -2 -2z" fill="url(#gl)"/><path d="M96.33 94v41M109.46 94v41M122.59 94v41M135.72 94v41M148.85 94v41M84 103.8h78M84 113.55h78M84 123.3h78" stroke="#fff" stroke-opacity=".3" stroke-width="1.1" fill="none"/><text x="85.8" y="105.2" fill="#00ffff" font-size="11.8" font-weight="bold" textLength="20" lengthAdjust="spacingAndGlyphs">TWA</text><text transform="scale(0.91,1)" x="129.73 141.32 152.91 167.75" y="130.1" fill="#00ffff" font-size="23.7" font-weight="bold" text-anchor="middle">-137</text></g><g><rect x="165" y="93" width="80" height="43" rx="5.5" fill="#000"/><path d="M168 99.5a4.5 4.5 0 0 1 4.5 -4.5h65a4.5 4.5 0 0 1 4.5 4.5v6.5a2 2 0 0 1 -2 2h-70a2 2 0 0 1 -2 -2z" fill="url(#gl)"/><path d="M178.33 94v41M191.46 94v41M204.59 94v41M217.72 94v41M230.85 94v41M166 103.8h78M166 113.55h78M166 123.3h78" stroke="#fff" stroke-opacity=".3" stroke-width="1.1" fill="none"/><text x="167.8" y="105.2" fill="#ffc800" font-size="11.8" font-weight="bold" textLength="69" lengthAdjust="spacingAndGlyphs">BSP MIN-MAX</text><text transform="scale(0.91,1)" x="204.89 219.73 231.37 243.02 257.86" y="130.1" fill="#ffc800" font-size="23.7" font-weight="bold" text-anchor="middle">06.75</text></g><g><rect x="1" y="138" width="80" height="43" rx="5.5" fill="#000"/><path d="M4 144.5a4.5 4.5 0 0 1 4.5 -4.5h65a4.5 4.5 0 0 1 4.5 4.5v6.5a2 2 0 0 1 -2 2h-70a2 2 0 0 1 -2 -2z" fill="url(#gl)"/><path d="M14.33 139v41M27.46 139v41M40.59 139v41M53.72 139v41M66.85 139v41M2 148.8h78M2 158.55h78M2 168.3h78" stroke="#fff" stroke-opacity=".3" stroke-width="1.1" fill="none"/><text x="3.8" y="150.2" fill="#00ff00" font-size="11.8" font-weight="bold" textLength="20" lengthAdjust="spacingAndGlyphs">AWS</text><text transform="scale(0.91,1)" x="27.91 39.51 51.15 62.8 77.64" y="175.1" fill="#00ff00" font-size="23.7" font-weight="bold" text-anchor="middle">15.55</text></g><g><rect x="83" y="138" width="80" height="43" rx="5.5" fill="#000"/><path d="M86 144.5a4.5 4.5 0 0 1 4.5 -4.5h65a4.5 4.5 0 0 1 4.5 4.5v6.5a2 2 0 0 1 -2 2h-70a2 2 0 0 1 -2 -2z" fill="url(#gl)"/><path d="M96.33 139v41M109.46 139v41M122.59 139v41M135.72 139v41M148.85 139v41M84 148.8h78M84 158.55h78M84 168.3h78" stroke="#fff" stroke-opacity=".3" stroke-width="1.1" fill="none"/><text x="85.8" y="150.2" fill="#00ffff" font-size="11.8" font-weight="bold" textLength="20" lengthAdjust="spacingAndGlyphs">TWS</text><text transform="scale(0.91,1)" x="114.78 129.62 141.26 152.91 167.75" y="175.1" fill="#00ffff" font-size="23.7" font-weight="bold" text-anchor="middle">20.00</text></g><g><rect x="165" y="138" width="80" height="43" rx="5.5" fill="#000"/><path d="M168 144.5a4.5 4.5 0 0 1 4.5 -4.5h65a4.5 4.5 0 0 1 4.5 4.5v6.5a2 2 0 0 1 -2 2h-70a2 2 0 0 1 -2 -2z" fill="url(#gl)"/><path d="M178.33 139v41M191.46 139v41M204.59 139v41M217.72 139v41M230.85 139v41M166 148.8h78M166 158.55h78M166 168.3h78" stroke="#fff" stroke-opacity=".3" stroke-width="1.1" fill="none"/><text x="167.8" y="150.2" fill="#00ffff" font-size="11.8" font-weight="bold" textLength="55" lengthAdjust="spacingAndGlyphs">BEAUFORT</text><text transform="scale(0.91,1)" x="233.68 245.77 257.86" y="175.1" fill="#00ffff" font-size="23.7" font-weight="bold" text-anchor="middle">F 5</text></g><g><rect x="1" y="183" width="80" height="43" rx="5.5" fill="#000"/><path d="M4 189.5a4.5 4.5 0 0 1 4.5 -4.5h65a4.5 4.5 0 0 1 4.5 4.5v6.5a2 2 0 0 1 -2 2h-70a2 2 0 0 1 -2 -2z" fill="url(#gl)"/><path d="M14.33 184v41M27.46 184v41M40.59 184v41M53.72 184v41M66.85 184v41M2 193.8h78M2 203.55h78M2 213.3h78" stroke="#fff" stroke-opacity=".3" stroke-width="1.1" fill="none"/><text x="3.8" y="195.2" fill="#00ff00" font-size="11.8" font-weight="bold" textLength="20" lengthAdjust="spacingAndGlyphs">COG</text><text transform="scale(0.91,1)" x="47.97 62.8 77.64" y="220.1" fill="#00ff00" font-size="23.7" font-weight="bold" text-anchor="middle">224</text></g><g><rect x="83" y="183" width="80" height="43" rx="5.5" fill="#000"/><path d="M86 189.5a4.5 4.5 0 0 1 4.5 -4.5h65a4.5 4.5 0 0 1 4.5 4.5v6.5a2 2 0 0 1 -2 2h-70a2 2 0 0 1 -2 -2z" fill="url(#gl)"/><path d="M96.33 184v41M109.46 184v41M122.59 184v41M135.72 184v41M148.85 184v41M84 193.8h78M84 203.55h78M84 213.3h78" stroke="#fff" stroke-opacity=".3" stroke-width="1.1" fill="none"/><text x="85.8" y="195.2" fill="#00ffff" font-size="11.8" font-weight="bold" textLength="20" lengthAdjust="spacingAndGlyphs">CDR</text><text transform="scale(0.91,1)" x="141.32 152.91 167.75" y="220.1" fill="#00ffff" font-size="23.7" font-weight="bold" text-anchor="middle">107</text></g><g><rect x="1" y="228" width="80" height="43" rx="5.5" fill="#000"/><path d="M4 234.5a4.5 4.5 0 0 1 4.5 -4.5h65a4.5 4.5 0 0 1 4.5 4.5v6.5a2 2 0 0 1 -2 2h-70a2 2 0 0 1 -2 -2z" fill="url(#gl)"/><path d="M14.33 229v41M27.46 229v41M40.59 229v41M53.72 229v41M66.85 229v41M2 238.8h78M2 248.55h78M2 258.3h78" stroke="#fff" stroke-opacity=".3" stroke-width="1.1" fill="none"/><text x="3.8" y="240.2" fill="#00ff00" font-size="11.8" font-weight="bold" textLength="20" lengthAdjust="spacingAndGlyphs">SOG</text><text transform="scale(0.91,1)" x="24.67 39.51 51.15 62.8 77.64" y="265.1" fill="#00ff00" font-size="23.7" font-weight="bold" text-anchor="middle">06.82</text></g><g><rect x="83" y="228" width="80" height="43" rx="5.5" fill="#000"/><path d="M86 234.5a4.5 4.5 0 0 1 4.5 -4.5h65a4.5 4.5 0 0 1 4.5 4.5v6.5a2 2 0 0 1 -2 2h-70a2 2 0 0 1 -2 -2z" fill="url(#gl)"/><path d="M96.33 229v41M109.46 229v41M122.59 229v41M135.72 229v41M148.85 229v41M84 238.8h78M84 248.55h78M84 258.3h78" stroke="#fff" stroke-opacity=".3" stroke-width="1.1" fill="none"/><text x="85.8" y="240.2" fill="#00ffff" font-size="11.8" font-weight="bold" textLength="20" lengthAdjust="spacingAndGlyphs">CSP</text><text transform="scale(0.91,1)" x="114.78 129.62 141.26 152.91 167.75" y="265.1" fill="#00ffff" font-size="23.7" font-weight="bold" text-anchor="middle">00.66</text></g><g><rect x="165" y="310" width="80" height="43" rx="5.5" fill="#000"/><path d="M168 316.5a4.5 4.5 0 0 1 4.5 -4.5h65a4.5 4.5 0 0 1 4.5 4.5v6.5a2 2 0 0 1 -2 2h-70a2 2 0 0 1 -2 -2z" fill="url(#gl)"/><path d="M178.33 311v41M191.46 311v41M204.59 311v41M217.72 311v41M230.85 311v41M166 320.8h78M166 330.55h78M166 340.3h78" stroke="#fff" stroke-opacity=".3" stroke-width="1.1" fill="none"/><text x="167.8" y="322.2" fill="#ffc800" font-size="11.8" font-weight="bold" textLength="69" lengthAdjust="spacingAndGlyphs">TWS MIN-MAX</text><text transform="scale(0.91,1)" x="204.89 219.73 231.37 243.02 257.86" y="347.1" fill="#ffc800" font-size="23.7" font-weight="bold" text-anchor="middle">20.00</text></g><rect x="165" y="3" width="80" height="90" fill="url(#bl)"/><path d="M165 60.5h80" stroke="#fff" stroke-width="1"/><path d="M165 62.5h80" stroke="#8080a0" stroke-opacity=".5" stroke-width="1"/><text x="168" y="65.19999999999999" fill="#fff" font-weight="bold">06.03 kts</text><text x="168" y="69.19999999999999" fill="#fff" font-weight="bold">06.09 kts</text><rect x="165" y="183" width="80" height="127.5" fill="url(#rd)"/><text x="167.7" y="309.9" fill="#f00">0 kts</text><text x="167.7" y="293.53" fill="#f00">10 kts</text><text x="167.7" y="277.16" fill="#f00">20 kts</text><text x="167.7" y="260.79" fill="#f00">30 kts</text><text x="167.7" y="244.42" fill="#f00">40 kts</text><text x="167.7" y="228.05" fill="#f00">50 kts</text><text x="167.7" y="211.68" fill="#f00">60 kts</text><text x="167.7" y="195.31" fill="#f00">70 kts</text><text x="244.3" y="309.7" fill="#f00" text-anchor="end">0</text><text x="244.3" y="308.06" fill="#f00" text-anchor="end">1</text><text x="244.3" y="303.15" fill="#f00" text-anchor="end">2</text><text x="244.3" y="298.24" fill="#f00" text-anchor="end">3</text><text x="244.3" y="291.69" fill="#f00" text-anchor="end">4</text><text x="244.3" y="281.87" fill="#f00" text-anchor="end">5</text><text x="244.3" y="273.69" fill="#f00" text-anchor="end">6</text><text x="244.3" y="263.86" fill="#f00" text-anchor="end">7</text><text x="244.3" y="254.04" fill="#f00" text-anchor="end">8</text><text x="244.3" y="242.58" fill="#f00" text-anchor="end">9</text><text x="244.3" y="231.12" fill="#f00" text-anchor="end">10</text><text x="244.3" y="218.03" fill="#f00" text-anchor="end">11</text><text x="244.3" y="204.93" fill="#f00" text-anchor="end">12</text><path d="M202.4 287.73h3.6M202.4 271.36h3.6M202.4 254.99h3.6M202.4 238.62h3.6M202.4 222.25h3.6M202.4 205.88h3.6M202.4 189.51h3.6M195 304.1H235.5M205.3 302.46H235.5M205.3 297.55H235.5M205.3 292.64H235.5M205.3 286.09H235.5M205.3 276.27H235.5M205.3 268.09H235.5M205.3 258.26H235.5M205.3 248.44H235.5M205.3 236.98H235.5M205.3 225.52H228.7M205.3 212.43H228.7M205.3 199.33H228.7" stroke="#f00" stroke-width="1" fill="none"/><rect x="165" y="270.6" width="80" height="8" fill="#707070" fill-opacity=".7"/><path d="M165 271.5h80" stroke="#000" stroke-width="1"/><text x="168.2" y="275.3" fill="#000" font-weight="bold">20.08 kts</text><text x="168.2" y="284" fill="#000" font-weight="bold">15.41 kts</text><circle cx="41.6" cy="313.9" r="38.5" fill="url(#dg)"/><path d="M8.1 315.9 A33.5 33.5 0 0 1 75.1 315.9 Z" fill="url(#dgl)"/><path d="M41.6 278.9A35 35 0 0 0 7.03 319.38" stroke="#c80000" stroke-opacity="0.4" stroke-width="10" fill="none"/><path d="M41.6 278.9A35 35 0 0 1 76.17 319.38" stroke="#00a000" stroke-opacity="0.45" stroke-width="10" fill="none"/><path d="M41.6 288.9L41.6 278.9M45.94 289.28L47.68 279.43M50.15 290.41L53.57 281.01M54.1 292.25L59.1 283.59M57.67 294.75L64.1 287.09M60.75 297.83L68.41 291.4M63.25 301.4L71.91 296.4M65.09 305.35L74.49 301.93M66.22 309.56L76.07 307.82M66.6 313.9L76.6 313.9M66.22 318.24L76.07 319.98M65.09 322.45L74.49 325.87M63.25 326.4L71.91 331.4M60.75 329.97L68.41 336.4M57.67 333.05L64.1 340.71M54.1 335.55L59.1 344.21M50.15 337.39L53.57 346.79M45.94 338.52L47.68 348.37M41.6 338.9L41.6 348.9M37.26 338.52L35.52 348.37M33.05 337.39L29.63 346.79M29.1 335.55L24.1 344.21M25.53 333.05L19.1 340.71M22.45 329.97L14.79 336.4M19.95 326.4L11.29 331.4M18.11 322.45L8.71 325.87M16.98 318.24L7.13 319.98M16.6 313.9L6.6 313.9M16.98 309.56L7.13 307.82M18.11 305.35L8.71 301.93M19.95 301.4L11.29 296.4M22.45 297.83L14.79 291.4M25.53 294.75L19.1 287.09M29.1 292.25L24.1 283.59M33.05 290.41L29.63 281.01M37.26 289.28L35.52 279.43" stroke="#e8e8e8" stroke-width="0.95" fill="none"/><circle cx="41.6" cy="313.9" r="5.3" fill="#dedede"/><path d="M41.6 313.9L16.45 329.31" stroke="#fff" stroke-width="3.6" stroke-linecap="round"/><text x="23.8" y="317.9" fill="#00ff00" font-size="13.97" font-weight="bold" textLength="34.2" lengthAdjust="spacingAndGlyphs">15.55</text><circle cx="123.7" cy="313.9" r="38.5" fill="url(#dg)"/><path d="M90.2 315.9 A33.5 33.5 0 0 1 157.2 315.9 Z" fill="url(#dgl)"/><path d="M128.04 289.28L129.78 279.43M132.25 290.41L135.67 281.01M136.2 292.25L141.2 283.59M139.77 294.75L146.2 287.09M142.85 297.83L150.51 291.4M145.35 301.4L154.01 296.4M147.19 305.35L156.59 301.93M148.32 309.56L158.17 307.82M148.7 313.9L158.7 313.9M148.32 318.24L158.17 319.98M147.19 322.45L156.59 325.87M145.35 326.4L154.01 331.4M142.85 329.97L150.51 336.4M139.77 333.05L146.2 340.71M136.2 335.55L141.2 344.21M132.25 337.39L135.67 346.79M128.04 338.52L129.78 348.37M123.7 338.9L123.7 348.9M119.36 338.52L117.62 348.37M115.15 337.39L111.73 346.79M111.2 335.55L106.2 344.21M107.63 333.05L101.2 340.71M104.55 329.97L96.89 336.4M102.05 326.4L93.39 331.4M100.21 322.45L90.81 325.87M99.08 318.24L89.23 319.98M98.7 313.9L88.7 313.9M99.08 309.56L89.23 307.82M100.21 305.35L90.81 301.93M102.05 301.4L93.39 296.4M104.55 297.83L96.89 291.4M107.63 294.75L101.2 287.09M111.2 292.25L106.2 283.59M115.15 290.41L111.73 281.01M119.36 289.28L117.62 279.43" stroke="#e8e8e8" stroke-width="0.95" fill="none"/><text x="123.4" y="293.8" fill="#b4b4b4" font-size="14" font-weight="bold" text-anchor="middle" textLength="8.7" lengthAdjust="spacingAndGlyphs">N</text><path d="M123 313.5L129.7 306.5L157 320.5L156 324.5L126 320.6Z" fill="#fff"/><text x="104.2" y="317.9" fill="#00ffff" font-size="13.97" font-weight="bold" textLength="37.6" lengthAdjust="spacingAndGlyphs">00.66</text></svg><svg class="a" style="left:1027px;top:140px" width="200" height="120" viewBox="0 0 200 120" font-family="Liberation Sans, sans-serif"><defs><radialGradient id="oa" gradientUnits="userSpaceOnUse" cx="100.0" cy="101.0" r="100"><stop offset="0" stop-color="#fff"/><stop offset="0.06" stop-color="#f4f4f4"/><stop offset="0.5" stop-color="#8a8a8a"/><stop offset="0.8" stop-color="#0c0c0c"/><stop offset="0.84" stop-color="#000"/><stop offset="0.868" stop-color="#000"/><stop offset="0.93" stop-color="#6c6c6c"/><stop offset="1" stop-color="#eeeeee"/></radialGradient><linearGradient id="ia" gradientUnits="userSpaceOnUse" x1="0" y1="26" x2="0" y2="73"><stop offset="0" stop-color="#b4b4b4"/><stop offset="1" stop-color="#000"/></linearGradient><linearGradient id="ha" gradientUnits="userSpaceOnUse" x1="0" y1="101.0" x2="0" y2="37.0"><stop offset="0" stop-color="#00108c"/><stop offset="0.6" stop-color="#0a3c9c"/><stop offset="1" stop-color="#1a78a8"/></linearGradient><clipPath id="ca"><rect x="0" y="0" width="200" height="101.0"/></clipPath></defs><circle cx="100.0" cy="101.0" r="100" fill="url(#oa)"/><g clip-path="url(#ca)"><circle cx="100.0" cy="101.0" r="83" fill="#000"/><circle cx="100.0" cy="101.0" r="75" fill="url(#ia)"/><circle cx="100.0" cy="101.0" r="83" fill="none" stroke="#e0e0e0" stroke-width="1"/><path d="M19.28 89.77L22.25 90.18M20.09 84.97L23.03 85.56M21.19 80.24L24.09 81M22.57 75.57L25.42 76.51M26.15 66.53L28.87 67.8M28.34 62.19L30.97 63.62M30.78 57.98L33.33 59.56M33.47 53.93L35.92 55.66M39.55 46.34L41.77 48.35M42.92 42.83L45.02 44.97M46.49 39.53L48.46 41.79M50.25 36.45L52.08 38.82M58.29 30.98L59.83 33.56M62.54 28.62L63.92 31.28M66.93 26.51L68.15 29.25M71.43 24.67L72.48 27.48M80.73 21.81L81.43 24.73M85.48 20.8L86.02 23.76M90.29 20.08L90.65 23.06M95.14 19.65L95.32 22.64M104.86 19.65L104.68 22.64M109.71 20.08L109.35 23.06M114.52 20.8L113.98 23.76M119.27 21.81L118.57 24.73M128.57 24.67L127.52 27.48M133.07 26.51L131.85 29.25M137.46 28.62L136.08 31.28M141.71 30.98L140.17 33.56M149.75 36.45L147.92 38.82M153.51 39.53L151.54 41.79M157.08 42.83L154.98 44.97M160.45 46.34L158.23 48.35M166.53 53.93L164.08 55.66M169.22 57.98L166.67 59.56M171.66 62.19L169.03 63.62M173.85 66.53L171.13 67.8M177.43 75.57L174.58 76.51M178.81 80.24L175.91 81M179.91 84.97L176.97 85.56M180.72 89.77L177.75 90.18" stroke="#d8d8d8" stroke-width="1" fill="none"/><path d="M17.26 94.49L23.24 94.96M22.83 70.45L28.41 72.65M35.22 49.1L39.91 52.86M53.35 32.35L56.72 37.31M75.59 21.67L77.36 27.4M100 18L100 24M124.41 21.67L122.64 27.4M146.65 32.35L143.28 37.31M164.78 49.1L160.09 52.86M177.17 70.45L171.59 72.65M182.74 94.49L176.76 94.96" stroke="#c8c8c8" stroke-width=".8" fill="none"/></g><path d="M17.0 93.0V101.0M183.0 93.0V101.0" stroke="#e0e0e0" stroke-width="1"/><text x="0" y="4" transform="translate(25.73 95.15) rotate(-85.5)" fill="#fff" font-family="Liberation Serif, serif" font-size="13" font-weight="bold" text-anchor="middle">0</text><text x="0" y="4" transform="translate(30.73 73.57) rotate(-68.4)" fill="#fff" font-family="Liberation Serif, serif" font-size="13" font-weight="bold" text-anchor="middle">1</text><text x="0" y="4" transform="translate(41.86 54.42) rotate(-51.3)" fill="#fff" font-family="Liberation Serif, serif" font-size="13" font-weight="bold" text-anchor="middle">2</text><text x="0" y="4" transform="translate(58.12 39.38) rotate(-34.2)" fill="#fff" font-family="Liberation Serif, serif" font-size="13" font-weight="bold" text-anchor="middle">3</text><text x="0" y="4" transform="translate(78.09 29.79) rotate(-17.1)" fill="#fff" font-family="Liberation Serif, serif" font-size="13" font-weight="bold" text-anchor="middle">4</text><text x="0" y="4" transform="translate(100 26.5) rotate(0)" fill="#fff" font-family="Liberation Serif, serif" font-size="13" font-weight="bold" text-anchor="middle">5</text><text x="0" y="4" transform="translate(121.91 29.79) rotate(17.1)" fill="#fff" font-family="Liberation Serif, serif" font-size="13" font-weight="bold" text-anchor="middle">6</text><text x="0" y="4" transform="translate(141.88 39.38) rotate(34.2)" fill="#fff" font-family="Liberation Serif, serif" font-size="13" font-weight="bold" text-anchor="middle">7</text><text x="0" y="4" transform="translate(158.14 54.42) rotate(51.3)" fill="#fff" font-family="Liberation Serif, serif" font-size="13" font-weight="bold" text-anchor="middle">8</text><text x="0" y="4" transform="translate(169.27 73.57) rotate(68.4)" fill="#fff" font-family="Liberation Serif, serif" font-size="13" font-weight="bold" text-anchor="middle">9</text><text x="0" y="4" transform="translate(174.27 95.15) rotate(85.5)" fill="#fff" font-family="Liberation Serif, serif" font-size="13" font-weight="bold" text-anchor="middle">10</text><text transform="scale(0.9,1)" x="92.22 108.11 117.78 127.22" y="60.7" fill="#00ff00" font-size="26.5" stroke="#00ff00" stroke-width=".5" text-anchor="middle">06.7</text><text x="99.7" y="80.8" fill="#00a400" font-size="13" text-anchor="middle" textLength="30" lengthAdjust="spacingAndGlyphs">KNOTS</text><path d="M120.27 37.14L128.45 21.96L122.35 20.03Z" fill="#f00"/><path d="M133.42 42.93L144.65 29.85L139.1 26.66Z" fill="#f00"/><path d="M102.77 102.6L132.18 45.1L97.23 99.4Z" fill="url(#ha)" stroke="#000" stroke-opacity=".6" stroke-width=".6"/><circle cx="100.0" cy="101.0" r="4.2" fill="#555"/><text x="100.7" y="118.8" fill="#f00" font-size="12.8" text-anchor="middle" textLength="21" lengthAdjust="spacingAndGlyphs">STW</text></svg><svg class="a" style="left:1027px;top:262px" width="200" height="120" viewBox="0 0 200 120" font-family="Liberation Sans, sans-serif"><defs><radialGradient id="ob" gradientUnits="userSpaceOnUse" cx="100.0" cy="101.0" r="100"><stop offset="0" stop-color="#fff"/><stop offset="0.06" stop-color="#f4f4f4"/><stop offset="0.5" stop-color="#8a8a8a"/><stop offset="0.8" stop-color="#0c0c0c"/><stop offset="0.84" stop-color="#000"/><stop offset="0.868" stop-color="#000"/><stop offset="0.93" stop-color="#6c6c6c"/><stop offset="1" stop-color="#eeeeee"/></radialGradient><linearGradient id="ib" gradientUnits="userSpaceOnUse" x1="0" y1="26" x2="0" y2="73"><stop offset="0" stop-color="#b4b4b4"/><stop offset="1" stop-color="#000"/></linearGradient><linearGradient id="hb" gradientUnits="userSpaceOnUse" x1="0" y1="101.0" x2="0" y2="37.0"><stop offset="0" stop-color="#00108c"/><stop offset="0.6" stop-color="#0a3c9c"/><stop offset="1" stop-color="#1a78a8"/></linearGradient><clipPath id="cb"><rect x="0" y="0" width="200" height="101.0"/></clipPath></defs><circle cx="100.0" cy="101.0" r="100" fill="url(#ob)"/><g clip-path="url(#cb)"><circle cx="100.0" cy="101.0" r="83" fill="#000"/><path d="M16.76 94.45A83.5 83.5 0 0 1 17.3 89.49L8.88 88.32A92 92 0 0 0 8.28 93.78Z" fill="#909090" fill-opacity=".6"/><path d="M20.67 74.95A83.5 83.5 0 0 1 26.58 61.23L19.1 57.19A92 92 0 0 0 12.59 72.3Z" fill="#909090" fill-opacity=".6"/><path d="M38.06 45A83.5 83.5 0 0 1 61.63 26.84L57.72 19.29A92 92 0 0 0 31.76 39.3Z" fill="#909090" fill-opacity=".6"/><path d="M85.13 18.84A83.5 83.5 0 0 1 114.87 18.84L116.39 10.47A92 92 0 0 0 83.61 10.47Z" fill="#909090" fill-opacity=".6"/><path d="M142.73 29.26A83.5 83.5 0 0 1 168.16 52.77L175.1 47.86A92 92 0 0 0 147.08 21.96Z" fill="#909090" fill-opacity=".6"/><path d="M181.87 84.58A83.5 83.5 0 0 1 183.24 94.45L191.72 93.78A92 92 0 0 0 190.2 82.91Z" fill="#909090" fill-opacity=".6"/><circle cx="100.0" cy="101.0" r="75" fill="url(#ib)"/><circle cx="100.0" cy="101.0" r="83" fill="none" stroke="#e0e0e0" stroke-width="1"/><path d="M17.26 94.49L13.27 94.17M17.79 89.56L13.83 89.01M18.62 84.68L14.7 83.89M19.74 79.85L15.87 78.83M21.14 75.1L17.34 73.86M22.83 70.45L19.11 68.97M24.79 65.9L21.16 64.2M27.02 61.47L23.5 59.57M29.5 57.19L26.11 55.08M32.24 53.06L28.98 50.75M35.22 49.1L32.1 46.6M38.44 45.33L35.47 42.65M41.87 41.76L39.06 38.9M45.5 38.4L42.88 35.38M49.33 35.26L46.89 32.09M53.35 32.35L51.1 29.04M57.53 29.69L55.48 26.25M61.85 27.28L60.02 23.73M66.32 25.14L64.7 21.48M70.91 23.27L69.5 19.52M75.59 21.67L74.42 17.85M80.37 20.35L79.42 16.47M85.22 19.33L84.5 15.39M90.11 18.59L89.64 14.62M95.05 18.15L94.81 14.15M100 18L100 14M104.95 18.15L105.19 14.15M109.89 18.59L110.36 14.62M114.78 19.33L115.5 15.39M119.63 20.35L120.58 16.47M124.41 21.67L125.58 17.85M129.09 23.27L130.5 19.52M133.68 25.14L135.3 21.48M138.15 27.28L139.98 23.73M142.47 29.69L144.52 26.25M146.65 32.35L148.9 29.04M150.67 35.26L153.11 32.09M154.5 38.4L157.12 35.38M158.13 41.76L160.94 38.9M161.56 45.33L164.53 42.65M164.78 49.1L167.9 46.6M167.76 53.06L171.02 50.75M170.5 57.19L173.89 55.08M172.98 61.47L176.5 59.57M175.21 65.9L178.84 64.2M177.17 70.45L180.89 68.97M178.86 75.1L182.66 73.86M180.26 79.85L184.13 78.83M181.38 84.68L185.3 83.89M182.21 89.56L186.17 89.01M182.74 94.49L186.73 94.17" stroke="#fff" stroke-opacity=".3" stroke-width="1" fill="none"/><circle cx="100.0" cy="101.0" r="87" fill="none" stroke="#fff" stroke-opacity=".3" stroke-width="1"/><circle cx="100.0" cy="101.0" r="85" fill="none" stroke="#fff" stroke-opacity=".25" stroke-width="1" stroke-dasharray="1.5 1.5"/></g><path d="M17.0 93.0V101.0M183.0 93.0V101.0" stroke="#e0e0e0" stroke-width="1"/><text x="0" y="4" transform="translate(25.73 95.15) rotate(-85.5)" fill="#fff" font-size="11.5" font-weight="bold" text-anchor="middle">0</text><text x="0" y="4" transform="translate(30.73 73.57) rotate(-68.4)" fill="#fff" font-size="11.5" font-weight="bold" text-anchor="middle">5</text><text x="0" y="4" transform="translate(41.86 54.42) rotate(-51.3)" fill="#fff" font-size="11.5" font-weight="bold" text-anchor="middle">10</text><text x="0" y="4" transform="translate(58.12 39.38) rotate(-34.2)" fill="#fff" font-size="11.5" font-weight="bold" text-anchor="middle">15</text><text x="0" y="4" transform="translate(78.09 29.79) rotate(-17.1)" fill="#fff" font-size="11.5" font-weight="bold" text-anchor="middle">20</text><text x="0" y="4" transform="translate(100 26.5) rotate(0)" fill="#fff" font-size="11.5" font-weight="bold" text-anchor="middle">25</text><text x="0" y="4" transform="translate(121.91 29.79) rotate(17.1)" fill="#fff" font-size="11.5" font-weight="bold" text-anchor="middle">30</text><text x="0" y="4" transform="translate(141.88 39.38) rotate(34.2)" fill="#fff" font-size="11.5" font-weight="bold" text-anchor="middle">35</text><text x="0" y="4" transform="translate(158.14 54.42) rotate(51.3)" fill="#fff" font-size="11.5" font-weight="bold" text-anchor="middle">40</text><text x="0" y="4" transform="translate(169.27 73.57) rotate(68.4)" fill="#fff" font-size="11.5" font-weight="bold" text-anchor="middle">45</text><text x="0" y="4" transform="translate(174.27 95.15) rotate(85.5)" fill="#fff" font-size="11.5" font-weight="bold" text-anchor="middle">50</text><text transform="scale(0.9,1)" x="92.22 108.11 117.78 127.22" y="60.7" fill="#00ff00" font-size="26.5" stroke="#00ff00" stroke-width=".5" text-anchor="middle">20.0</text><text x="99.7" y="80.8" fill="#00a400" font-size="13" text-anchor="middle" textLength="30" lengthAdjust="spacingAndGlyphs">KNOTS</text><path d="M63.71 44.68L57.22 28.71L51.84 32.17Z" fill="#f00"/><path d="M84.35 35.85L83.5 18.64L77.28 20.13Z" fill="#f00"/><path d="M103.06 100.06L81.03 39.35L96.94 101.94Z" fill="url(#hb)" stroke="#000" stroke-opacity=".6" stroke-width=".6"/><circle cx="100.0" cy="101.0" r="4.2" fill="#555"/><text x="100.7" y="118.8" fill="#f00" font-size="12.8" text-anchor="middle" textLength="21" lengthAdjust="spacingAndGlyphs">TWS</text></svg><div class="btn" style="left:1066px;top:395px;width:121px;height:21px;padding-top:3px;letter-spacing:0.043px">Reset Min &amp; Max</div><div class="cb" style="left:1033px;top:433px"><svg class="a" style="left:1px;top:1px" width="10" height="10" viewBox="0 0 10 10"><path d="M2.2 4.6 L4.3 8 C5.2 5.4 6.6 3.2 8.4 1.4" fill="none" stroke="#3f559b" stroke-width="2" stroke-linejoin="miter"/></svg></div><div class="t"  style="left:1050px;top:433px;letter-spacing:-0.001px;">With Min &amp; Max</div><div class="cb" style="left:1033px;top:467px"><svg class="a" style="left:1px;top:1px" width="10" height="10" viewBox="0 0 10 10"><path d="M2.2 4.6 L4.3 8 C5.2 5.4 6.6 3.2 8.4 1.4" fill="none" stroke="#3f559b" stroke-width="2" stroke-linejoin="miter"/></svg></div><div class="t"  style="left:1050px;top:467px;letter-spacing:0.133px;">Show Beaufort Scale</div><div class="cb" style="left:786px;top:496px"><svg class="a" style="left:1px;top:1px" width="10" height="10" viewBox="0 0 10 10"><path d="M2.2 4.6 L4.3 8 C5.2 5.4 6.6 3.2 8.4 1.4" fill="none" stroke="#3f559b" stroke-width="2" stroke-linejoin="miter"/></svg></div><div class="t"  style="left:803px;top:496px;letter-spacing:0.162px;">Show 2D Pane</div><div class="cb" style="left:786px;top:519px"><svg class="a" style="left:1px;top:1px" width="10" height="10" viewBox="0 0 10 10"><path d="M2.2 4.6 L4.3 8 C5.2 5.4 6.6 3.2 8.4 1.4" fill="none" stroke="#3f559b" stroke-width="2" stroke-linejoin="miter"/></svg></div><div class="t"  style="left:803px;top:519px;letter-spacing:0.259px;">Show mini &amp; maxi</div><div class="cb" style="left:786px;top:542px"><svg class="a" style="left:1px;top:1px" width="10" height="10" viewBox="0 0 10 10"><path d="M2.2 4.6 L4.3 8 C5.2 5.4 6.6 3.2 8.4 1.4" fill="none" stroke="#3f559b" stroke-width="2" stroke-linejoin="miter"/></svg></div><div class="t"  style="left:803px;top:542px;letter-spacing:0.219px;">Show Water Temp.</div><div class="cb" style="left:786px;top:565px"><svg class="a" style="left:1px;top:1px" width="10" height="10" viewBox="0 0 10 10"><path d="M2.2 4.6 L4.3 8 C5.2 5.4 6.6 3.2 8.4 1.4" fill="none" stroke="#3f559b" stroke-width="2" stroke-linejoin="miter"/></svg></div><div class="t"  style="left:803px;top:565px;letter-spacing:0.154px;">Display Current</div><div class="cb" style="left:918px;top:496px"></div><div class="t"  style="left:935px;top:496px;letter-spacing:0.108px;">Wind Auto-Scale</div><div class="cb" style="left:918px;top:519px"><svg class="a" style="left:1px;top:1px" width="10" height="10" viewBox="0 0 10 10"><path d="M2.2 4.6 L4.3 8 C5.2 5.4 6.6 3.2 8.4 1.4" fill="none" stroke="#3f559b" stroke-width="2" stroke-linejoin="miter"/></svg></div><div class="t"  style="left:935px;top:519px;letter-spacing:0.246px;">Show analog displays</div><div class="cb" style="left:918px;top:542px"></div><div class="t"  style="left:935px;top:542px;letter-spacing:0.246px;">Show</div><div class="a" style="left:934px;top:541px;width:32px;height:15px;border:1px dotted #000"></div><div class="cb" style="left:918px;top:565px"><svg class="a" style="left:1px;top:1px" width="10" height="10" viewBox="0 0 10 10"><path d="M2.2 4.6 L4.3 8 C5.2 5.4 6.6 3.2 8.4 1.4" fill="none" stroke="#3f559b" stroke-width="2" stroke-linejoin="miter"/></svg></div><div class="t"  style="left:935px;top:565px;letter-spacing:0.284px;">Perimeter Ticks</div><div class="btn" style="left:971px;top:538px;width:121px;height:22px;text-align:left;padding:3px 0 0 3px;letter-spacing:0.028px">VMG on Wind<svg class="a" style="left:106px;top:8px" width="9" height="5" viewBox="0 0 9 5"><path d="M0.5 0 L8.5 0 L4.5 4.5 Z" fill="#000"/></svg></div><div class="t"  style="left:787px;top:593px;letter-spacing:0.032px;">True Wind:</div><div class="a" style="left:855px;top:593.5px;width:12px;height:12px;border-radius:50%;border:1px solid #8e8f8f;background:radial-gradient(circle at 35% 35%,#fdfdfd 0,#e4e4e4 60%,#cfcfcf 100%)"></div><div class="a" style="left:858px;top:596.5px;width:6px;height:6px;border-radius:50%;background:radial-gradient(circle at 35% 35%,#5aa0e0 0,#1a4a9c 70%,#0a2a6c 100%)"></div><div class="t"  style="left:872px;top:593px;letter-spacing:-0.027px;">With GPS Data</div><div class="a" style="left:967px;top:593.5px;width:12px;height:12px;border-radius:50%;border:1px solid #8e8f8f;background:radial-gradient(circle at 35% 35%,#fdfdfd 0,#e4e4e4 60%,#cfcfcf 100%)"></div><div class="t"  style="left:984px;top:593px;letter-spacing:-0.104px;">With BSP &amp; AW</div><div class="btn" style="left:784px;top:618px;width:22px;height:22px"><svg class="a" style="left:3px;top:2px" width="14" height="16" viewBox="0 0 14 16"><rect x="1.5" y="1.5" width="4" height="13" rx="1" fill="#ffd800" stroke="#a07800" stroke-width="1"/><rect x="8" y="1.5" width="4" height="13" rx="1" fill="#ffd800" stroke="#a07800" stroke-width="1"/></svg></div><div class="btn" style="left:821px;top:618px;width:22px;height:22px"><svg class="a" style="left:2px;top:3px" width="16" height="14" viewBox="0 0 16 14"><path d="M7 1 L9.5 1 L4.5 7 L9.5 13 L7 13 L1.5 7 Z M13 1 L15.5 1 L10.5 7 L15.5 13 L13 13 L7.5 7 Z" fill="#2a8cf0" stroke="#0a4cb0" stroke-width=".9"/></svg></div><div class="cb" style="left:786px;top:647px"></div><div class="t"  style="left:803px;top:647px;letter-spacing:-0.038px;">With Perf</div><svg class="a" style="left:488px;top:8px" width="20" height="26" viewBox="488 8 20 26"><path d="M492.5 11.5 L492.5 27.6 L496.3 24.1 L499 29.9 L501.4 28.7 L498.8 23 L503.9 23 Z" fill="#fbfbfb" stroke="#0c1424" stroke-width="1.1" stroke-linejoin="round"/></svg></body></html>
